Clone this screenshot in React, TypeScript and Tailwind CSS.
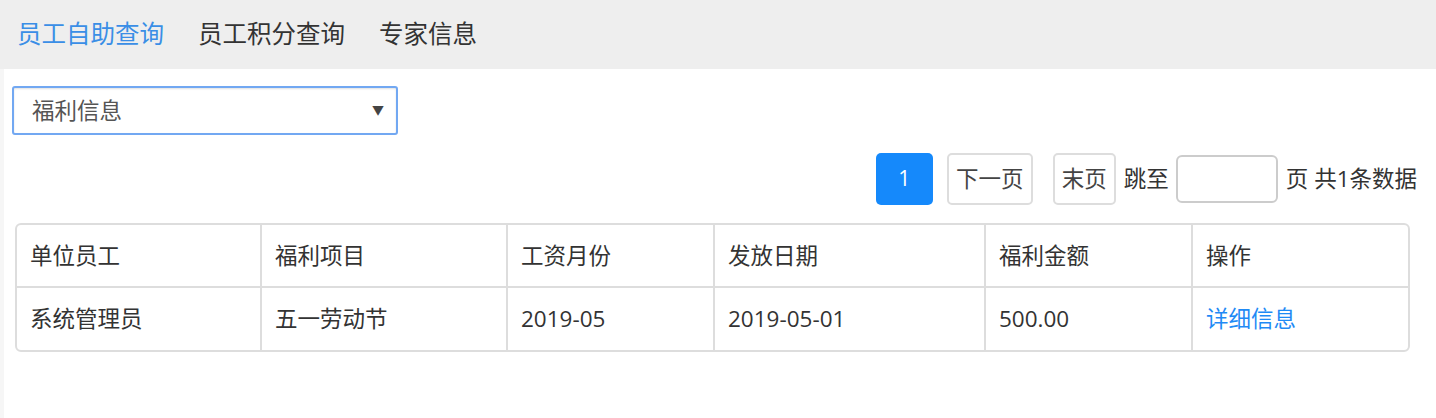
const columns = ["单位员工", "福利项目", "工资月份", "发放日期", "福利金额", "操作"];

const rows = [
  {
    name: "系统管理员",
    item: "五一劳动节",
    month: "2019-05",
    date: "2019-05-01",
    amount: "500.00",
  },
];

const navItems = ["员工自助查询", "员工积分查询", "专家信息"];

export default function App() {
  return (
    <div
      className="min-h-[418px] bg-white text-[#333]"
      style={{ fontFamily: '"Open Sans", "Noto Sans CJK SC", sans-serif' }}
    >
      <nav className="flex h-[69px] items-center gap-[34px] bg-[#eeeeee] pl-[17px] text-[24.5px]">
        {navItems.map((item, i) => (
          <span key={item} className={i === 0 ? "text-[#3a8ee6]" : "text-[#333]"}>
            {item}
          </span>
        ))}
      </nav>

      <div className="flex min-h-[349px]">
        <div className="w-[4px] shrink-0 bg-[#f6f6f6]" />
        <div className="flex-1 pl-[8px] pt-[17px] pr-[19px]">
          {/* select */}
          <div className="flex h-[49px] w-[386px] items-center justify-between rounded-[3px] border-2 border-[#72a8f2] pl-[18px] pr-[12px] text-[22.5px] text-[#555] shadow-[inset_0_1px_2px_rgba(0,0,0,0.12)]">
            <span>福利信息</span>
            <span className="text-[12px] text-[#444]">▼</span>
          </div>

          {/* pagination */}
          <div className="mt-[18px] flex items-center justify-end text-[22.5px]">
            <button className="flex h-[52px] w-[57px] items-center justify-center rounded-[5px] bg-[#1589fb] text-[21px] text-white">
              1
            </button>
            <button className="ml-[14px] flex h-[52px] w-[86px] items-center justify-center rounded-[5px] border-2 border-[#dddddd] text-[#444]">
              下一页
            </button>
            <button className="ml-[20px] flex h-[52px] w-[63px] items-center justify-center rounded-[5px] border-2 border-[#dddddd] text-[#444]">
              末页
            </button>
            <span className="ml-[8px]">跳至</span>
            <input className="ml-[7px] h-[48px] w-[102px] rounded-[6px] border-2 border-[#cccccc] outline-none" />
            <span className="ml-[8px]">页 共1条数据</span>
          </div>

          {/* table */}
          <div className="ml-[3px] mt-[18px] w-[1395px] overflow-hidden rounded-[6px] border-2 border-[#dddddd] text-[22.5px]">
            <div className="grid h-[63px] grid-cols-[245px_246px_207px_271px_207px_1fr] border-b-2 border-[#dddddd]">
              {columns.map((c, i) => (
                <div
                  key={c}
                  className={`flex items-center pl-[13px] ${i < columns.length - 1 ? "border-r-2 border-[#dddddd]" : ""}`}
                >
                  {c}
                </div>
              ))}
            </div>
            {rows.map((r) => (
              <div key={r.name} className="grid h-[62px] grid-cols-[245px_246px_207px_271px_207px_1fr]">
                <div className="flex items-center border-r-2 border-[#dddddd] pl-[13px]">{r.name}</div>
                <div className="flex items-center border-r-2 border-[#dddddd] pl-[13px]">{r.item}</div>
                <div className="flex items-center border-r-2 border-[#dddddd] pl-[13px]">{r.month}</div>
                <div className="flex items-center border-r-2 border-[#dddddd] pl-[13px]">{r.date}</div>
                <div className="flex items-center border-r-2 border-[#dddddd] pl-[13px]">{r.amount}</div>
                <div className="flex items-center pl-[13px]">
                  <a className="cursor-pointer text-[#1f8af5]">详细信息</a>
                </div>
              </div>
            ))}
          </div>
        </div>
      </div>
    </div>
  );
}
